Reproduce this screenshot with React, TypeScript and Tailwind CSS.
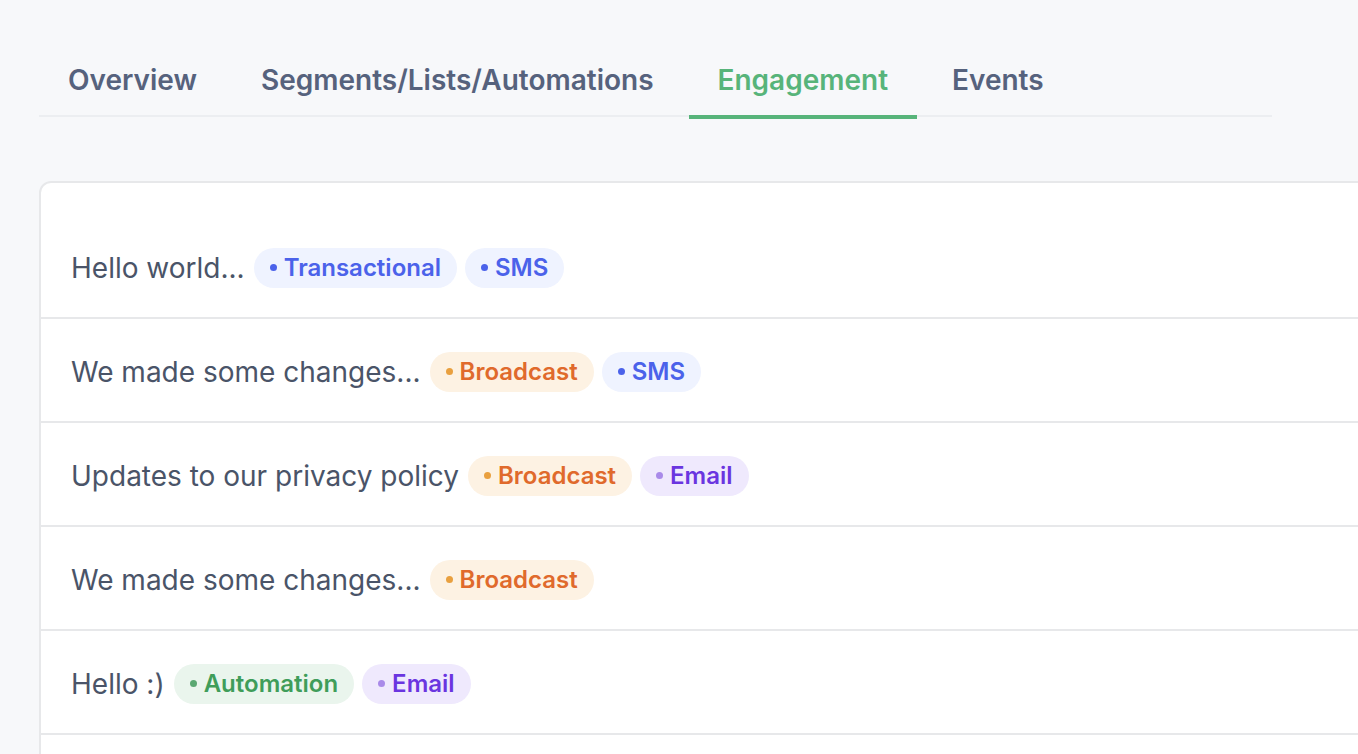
import React from 'react';

type Tone = 'blue' | 'orange' | 'purple' | 'green';

const toneStyles: Record<Tone, { pill: string; dot: string }> = {
  blue: { pill: 'bg-[#eff3ff] text-[#4b62ea]', dot: 'bg-[#4b62ea]' },
  orange: { pill: 'bg-[#fdf2e3] text-[#e06a2c]', dot: 'bg-[#e9a03f]' },
  purple: { pill: 'bg-[#efe9fd] text-[#6a35e0]', dot: 'bg-[#a98ae9]' },
  green: { pill: 'bg-[#eaf5ed] text-[#3f9d5a]', dot: 'bg-[#5aa871]' },
};

const tagTone: Record<string, Tone> = {
  Transactional: 'blue',
  SMS: 'blue',
  Broadcast: 'orange',
  Email: 'purple',
  Automation: 'green',
};

const tabs = ['Overview', 'Segments/Lists/Automations', 'Engagement', 'Events'];

const messages = [
  { title: 'Hello world...', tags: ['Transactional', 'SMS'] },
  { title: 'We made some changes...', tags: ['Broadcast', 'SMS'] },
  { title: 'Updates to our privacy policy', tags: ['Broadcast', 'Email'] },
  { title: 'We made some changes...', tags: ['Broadcast'] },
  { title: 'Hello :)', tags: ['Automation', 'Email'] },
];

const Tag = ({ label }: { label: string }) => {
  const tone = toneStyles[tagTone[label]];
  return (
    <span className={`flex items-center gap-[7px] h-[40px] pl-[16px] pr-[16px] rounded-full text-[24px] font-semibold leading-none ${tone.pill}`}>
      <span className={`w-[7px] h-[7px] rounded-full ${tone.dot}`}></span>
      {label}
    </span>
  );
};

export default function App() {
  const active = 'Engagement';

  return (
    <div className="w-[1358px] h-[754px] overflow-hidden bg-[#f7f8fa] pl-[39px] pt-[62px] font-['Inter','Noto_Sans',sans-serif]">
      {/* Tabs */}
      <div className="flex gap-[6px] w-[1233px] border-b-2 border-[#eceef1]">
        {tabs.map((t) => (
          <div
            key={t}
            className={`px-[29px] pb-[17px] -mb-[4px] border-b-4 text-[28px] font-semibold leading-[36px] ${
              t === active ? 'border-[#57b47a] text-[#57b47a]' : 'border-transparent text-[#56627d]'
            }`}
          >
            {t}
          </div>
        ))}
      </div>

      {/* Messages card */}
      <div className="mt-[64px] w-[1360px] bg-white border-2 border-[#e7e8ea] rounded-tl-[12px] pt-[32px]">
        {messages.map((m, i) => (
          <div key={i} className="flex items-center gap-[9px] h-[104px] px-[30px] pt-[3px] border-b-2 border-[#e7e8ea]">
            <span className="text-[28px] text-[#4a5468] leading-none">{m.title}</span>
            <div className="flex items-center gap-[8px]">
              {m.tags.map((tg) => (
                <Tag key={tg} label={tg} />
              ))}
            </div>
          </div>
        ))}
        <div className="h-[104px]"></div>
      </div>
    </div>
  );
}
